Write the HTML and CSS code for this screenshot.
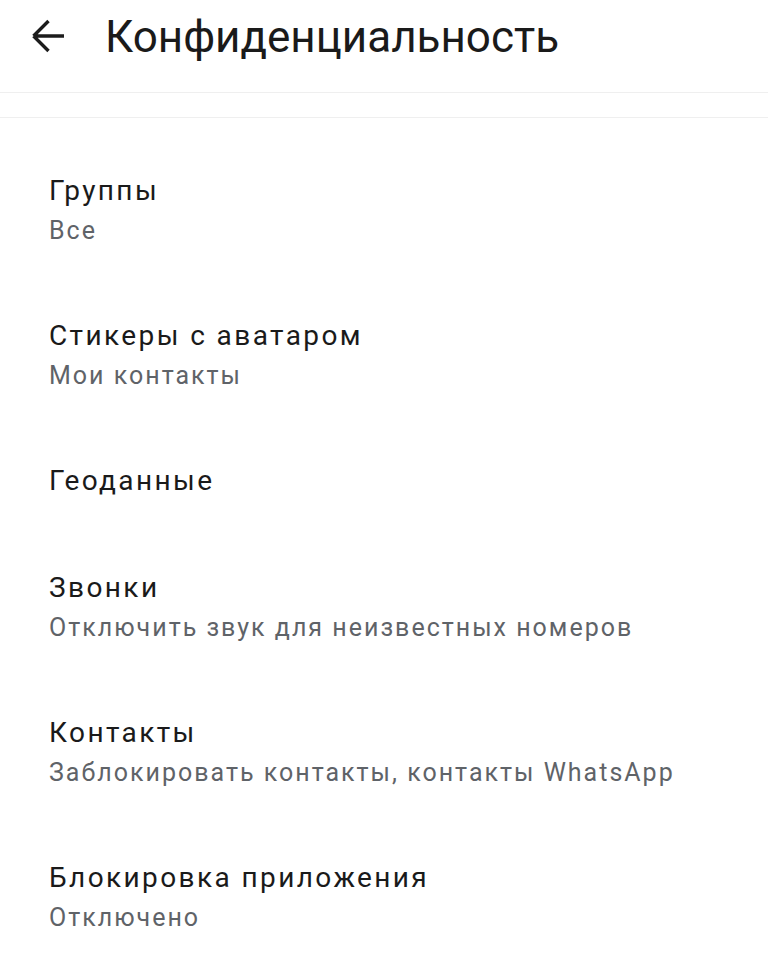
FILE: index.html
```html
<!DOCTYPE html>
<html>
<head>
  <title>Конфиденциальность</title>
  <link rel="stylesheet" href="styles.css">
</head>
<body>
  <header class="topbar">
    <button type="button" class="back" aria-label="Назад">
      <svg viewBox="0 0 34 34" width="34" height="34">
        <path d="M2.5 17L17.5 2M2.5 17L17.5 32M2.5 17H33" fill="none" stroke="#1c1c1c" stroke-width="3.4"/>
      </svg>
    </button>
    <h1>Конфиденциальность</h1>
  </header>
  <div class="divider-band"></div>
  <main>
    <ul class="settings">
      <li class="item">
        <span class="item-title">Группы</span>
        <span class="item-sub">Все</span>
      </li>
      <li class="item">
        <span class="item-title">Стикеры с аватаром</span>
        <span class="item-sub">Мои контакты</span>
      </li>
      <li class="item">
        <span class="item-title">Геоданные</span>
      </li>
      <li class="item">
        <span class="item-title">Звонки</span>
        <span class="item-sub">Отключить звук для неизвестных номеров</span>
      </li>
      <li class="item">
        <span class="item-title">Контакты</span>
        <span class="item-sub">Заблокировать контакты, контакты WhatsApp</span>
      </li>
      <li class="item">
        <span class="item-title">Блокировка приложения</span>
        <span class="item-sub">Отключено</span>
      </li>
    </ul>
  </main>
</body>
</html>
```

FILE: styles.css
```css
body {
  margin: 0;
  background-color: #ffffff;
  font-family: Roboto, "Noto Sans", sans-serif;
  color: #1a1a1a;
}

.topbar {
  display: flex;
  align-items: center;
  height: 74px;
  padding: 0 0 0 31px;
}

.back {
  display: flex;
  padding: 0;
  margin-bottom: 2px;
  border: none;
  background: none;
  cursor: pointer;
}

.topbar h1 {
  margin: 0 0 0 40px;
  font-size: 44px;
  font-weight: 400;
}

/* thin band under the toolbar */
.divider-band {
  height: 24px;
  margin-top: 18px;
  border-top: 1px solid #efefef;
  border-bottom: 1px solid #efefef;
}

.settings {
  list-style: none;
  margin: 0;
  padding: 19px 0 0;
}

.item {
  display: flex;
  flex-direction: column;
  padding: 33px 49px 32px;
}

.item-title {
  font-size: 28px;
  line-height: 42px;
  letter-spacing: 2.4px;
}

.item-sub {
  font-size: 25px;
  line-height: 38px;
  letter-spacing: 2px;
  color: #5f6368;
}
```
